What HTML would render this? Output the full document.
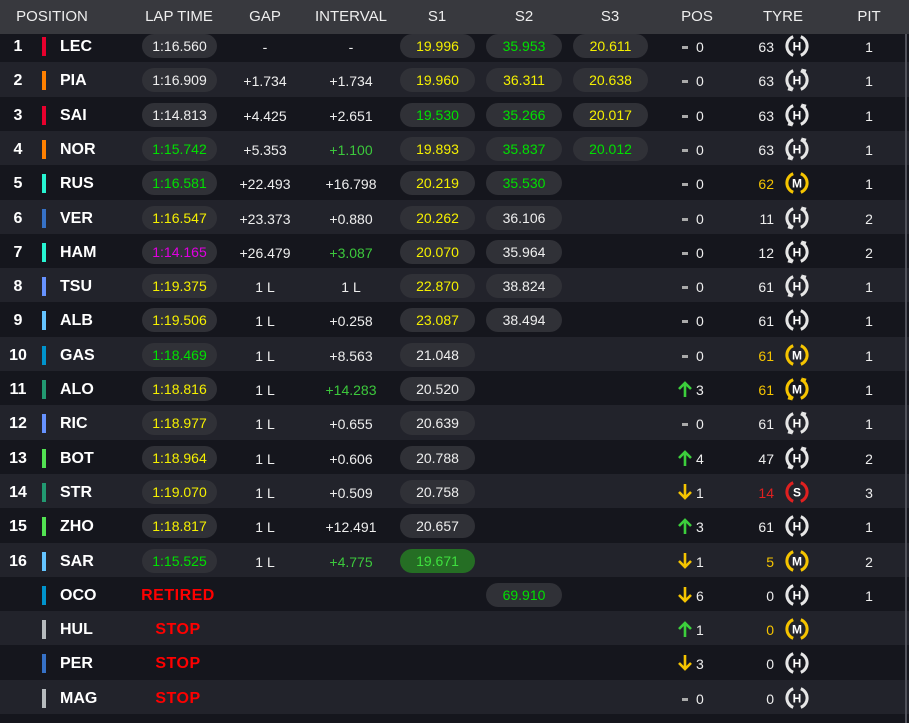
<!DOCTYPE html>
<html><head><meta charset="utf-8"><style>
*{margin:0;padding:0;box-sizing:border-box}
body{width:909px;height:723px;overflow:hidden;background:#15161d;font-family:"Liberation Sans",sans-serif;color:#eee;position:relative}
.hdr{position:absolute;left:0;top:0;width:909px;height:34px;background:#38393e;z-index:2}
.hdr span{position:absolute;top:8px;font-size:15px;color:#eee;text-align:center}
.row{position:absolute;left:0;width:909px;height:34.3px}
.row.l{background:#22232b}
.c{position:absolute;top:2px;height:34px;line-height:34px;font-size:14px;text-align:center;white-space:nowrap}
.num{left:2px;width:32px;font-weight:bold;font-size:16px;color:#fff}
.bar{position:absolute;left:42px;top:9px;width:4px;height:19px}
.drv{left:60px;font-weight:bold;font-size:16px;color:#fff}
.pill{position:absolute;top:6px;height:24px;line-height:24px;border-radius:12px;background:#303137;font-size:14px;text-align:center}
.lt{left:142px;width:75px}
.s1{left:400px;width:75px}.s2{left:486px;width:76px}.s3{left:573px;width:75px}
.gap{left:225px;width:80px}.int{left:305px;width:92px}
.pd{position:absolute;left:682px;top:18px;width:6px;height:3px;background:#aaa}
.pn{left:696px;width:16px;text-align:left}
.ty{left:740px;width:34px;text-align:right}
.ic{position:absolute;left:784px;top:5px}
.ar{position:absolute;left:677px;top:9px}
.pit{left:855px;width:28px}
.y{color:#f5f000}.g{color:#00e000}.p{color:#e000e0}.w{color:#eee}.ig{color:#3cc83c}.yt{color:#f5c400}.rt{color:#e02020}
.st{font-weight:bold;color:#f00;font-size:16px;letter-spacing:.5px}
</style></head><body>
<div class="hdr">
<span style="left:14px;width:76px">POSITION</span>
<span style="left:140px;width:78px">LAP TIME</span>
<span style="left:245px;width:40px">GAP</span>
<span style="left:305px;width:92px">INTERVAL</span>
<span style="left:420px;width:34px">S1</span>
<span style="left:507px;width:34px">S2</span>
<span style="left:593px;width:34px">S3</span>
<span style="left:677px;width:40px">POS</span>
<span style="left:760px;width:46px">TYRE</span>
<span style="left:852px;width:34px">PIT</span>
</div>
<div id="rows"></div>
<script>
const R=[
["1","#e8002d","LEC",["1:16.560","w"],"-","-",["19.996","y"],["35.953","g"],["20.611","y"],"-","0","63","","H",0,"1",""],
["2","#ff8000","PIA",["1:16.909","w"],"+1.734","+1.734",["19.960","y"],["36.311","y"],["20.638","y"],"-","0","63","","H",1,"1",""],
["3","#e8002d","SAI",["1:14.813","w"],"+4.425","+2.651",["19.530","g"],["35.266","g"],["20.017","y"],"-","0","63","","H",1,"1",""],
["4","#ff8000","NOR",["1:15.742","g"],"+5.353",["+1.100","ig"],["19.893","y"],["35.837","g"],["20.012","g"],"-","0","63","","H",1,"1",""],
["5","#27f4d2","RUS",["1:16.581","g"],"+22.493","+16.798",["20.219","y"],["35.530","g"],null,"-","0","62","yt","M",0,"1",""],
["6","#3671c6","VER",["1:16.547","y"],"+23.373","+0.880",["20.262","y"],["36.106","w"],null,"-","0","11","","H",1,"2",""],
["7","#27f4d2","HAM",["1:14.165","p"],"+26.479",["+3.087","ig"],["20.070","y"],["35.964","w"],null,"-","0","12","","H",1,"2",""],
["8","#6692ff","TSU",["1:19.375","y"],"1 L","1 L",["22.870","y"],["38.824","w"],null,"-","0","61","","H",1,"1",""],
["9","#64c4ff","ALB",["1:19.506","y"],"1 L","+0.258",["23.087","y"],["38.494","w"],null,"-","0","61","","H",0,"1",""],
["10","#0093cc","GAS",["1:18.469","g"],"1 L","+8.563",["21.048","w"],null,null,"-","0","61","yt","M",0,"1",""],
["11","#229971","ALO",["1:18.816","y"],"1 L",["+14.283","ig"],["20.520","w"],null,null,"u","3","61","yt","M",1,"1",""],
["12","#6692ff","RIC",["1:18.977","y"],"1 L","+0.655",["20.639","w"],null,null,"-","0","61","","H",1,"1",""],
["13","#52e252","BOT",["1:18.964","y"],"1 L","+0.606",["20.788","w"],null,null,"u","4","47","","H",1,"2",""],
["14","#229971","STR",["1:19.070","y"],"1 L","+0.509",["20.758","w"],null,null,"d","1","14","rt","S",0,"3",""],
["15","#52e252","ZHO",["1:18.817","y"],"1 L","+12.491",["20.657","w"],null,null,"u","3","61","","H",0,"1",""],
["16","#64c4ff","SAR",["1:15.525","g"],"1 L",["+4.775","ig"],["19.671","gp"],null,null,"d","1","5","yt","M",0,"2",""],
["","#0093cc","OCO",null,"","",null,["69.910","g"],null,"d","6","0","","H",0,"1","RETIRED"],
["","#b6babd","HUL",null,"","",null,null,null,"u","1","0","yt","M",0,"","STOP"],
["","#3671c6","PER",null,"","",null,null,null,"d","3","0","","H",0,"","STOP"],
["","#b6babd","MAG",null,"","",null,null,null,"-","0","0","","H",0,"","STOP"]];
const col={"":"#e6e6e6",yt:"#f5c400",rt:"#e02020"};
let h="";
R.forEach((r,i)=>{
 const top=28+34.3*i;
 h+=`<div class="row ${i%2?'l':''}" style="top:${top}px">`;
 h+=`<div class="c num">${r[0]}</div><div class="bar" style="background:${r[1]}"></div><div class="c drv">${r[2]}</div>`;
 if(r[3])h+=`<div class="pill lt ${r[3][1]}">${r[3][0]}</div>`;
 if(r[16]){h+= r[16]=="RETIRED"?`<div class="c st" style="left:136px;width:84px">RETIRED</div>`:`<div class="c st" style="left:150px;width:56px">STOP</div>`;}
 const t=x=>typeof x=="string"?[x,"w"]:x;
 if(r[4]!==""){const g=t(r[4]);h+=`<div class="c gap ${g[1]}">${g[0]}</div>`;}
 if(r[5]!==""){const g=t(r[5]);h+=`<div class="c int ${g[1]}">${g[0]}</div>`;}
 ["s1","s2","s3"].forEach((s,k)=>{const v=r[6+k];if(v){if(v[1]=="gp")h+=`<div class="pill ${s}" style="background:#256e24;color:#3ee03e">${v[0]}</div>`;else h+=`<div class="pill ${s} ${v[1]}">${v[0]}</div>`;}});
 if(r[9]=="-")h+=`<div class="pd"></div>`;
 else if(r[9]=="u")h+=`<svg class="ar" width="16" height="18" viewBox="0 0 16 18"><path d="M8 17V3M2 9l6-6 6 6" fill="none" stroke="#3ccf3c" stroke-width="2.6"/></svg>`;
 else h+=`<svg class="ar" width="16" height="18" viewBox="0 0 16 18"><path d="M8 1v14M2 9l6 6 6-6" fill="none" stroke="#f5c400" stroke-width="2.6"/></svg>`;
 h+=`<div class="c pn">${r[10]}</div>`;
 h+=`<div class="c ty ${r[12]}">${r[11]}</div>`;
 const cc=col[r[12]];
 const arr=r[14]?`<path d="M17.5 1.5l5 1.2-1.6 4.6zM8.5 24.5l-5-1.2 1.6-4.6z" fill="${cc}"/>`:'';
 h+=`<svg class="ic" width="26" height="26" viewBox="0 0 26 26"><path d="M9.2 3.7A10 10 0 0 0 9.2 22.3M16.8 3.7A10 10 0 0 1 16.8 22.3" fill="none" stroke="${cc}" stroke-width="3"/>${arr}<text x="13" y="17.5" text-anchor="middle" font-family="Liberation Sans" font-weight="bold" font-size="12" fill="#fff">${r[13]}</text></svg>`;
 h+=`<div class="c pit">${r[15]}</div></div>`;
});
document.getElementById("rows").innerHTML=h;
</script>
<div style="position:absolute;left:905px;top:34px;width:2px;height:689px;background:#50515a"></div>
</body></html>
